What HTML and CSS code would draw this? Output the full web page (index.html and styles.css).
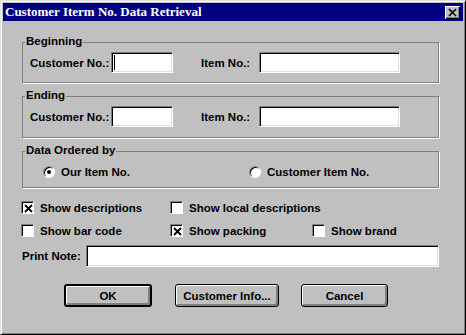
FILE: index.html
```html
<!DOCTYPE html>
<html lang="en">
<head>
  <meta charset="UTF-8" />
  <title>Customer Iterm No. Data Retrieval</title>
  <link rel="stylesheet" href="styles.css">
</head>
<body>

  <div class="window">
    <div class="titlebar">
      <span class="title">Customer Iterm No. Data Retrieval</span>
      <span class="close-btn">
        <svg width="15" height="13" viewBox="0 0 15 13"><path d="M4 3 L11 10 M11 3 L4 10" stroke="#000" stroke-width="1.7" fill="none"/></svg>
      </span>
    </div>

    <div class="content">
      <div class="group first">
        <div class="group-title">Beginning</div>
        <div class="field-row">
          <span class="lbl lbl-cust">Customer No.:</span>
          <span class="field field-cust"><span class="caret"></span></span>
          <span class="lbl lbl-item">Item No.:</span>
          <span class="field field-item"></span>
        </div>
      </div>

      <div class="group ending">
        <div class="group-title">Ending</div>
        <div class="field-row">
          <span class="lbl lbl-cust">Customer No.:</span>
          <span class="field field-cust"></span>
          <span class="lbl lbl-item">Item No.:</span>
          <span class="field field-item"></span>
        </div>
      </div>

      <div class="group">
        <div class="group-title">Data Ordered by</div>
        <div class="radio-row">
          <span class="option option-first"><span class="radio checked"><span class="dot"></span></span>Our Item No.</span>
          <span class="option"><span class="radio"></span>Customer Item No.</span>
        </div>
      </div>

      <div class="check-row">
        <span class="check col-1"><span class="box"><svg width="9" height="9" viewBox="0 0 9 9"><path d="M1 1 L8 8 M8 1 L1 8" stroke="#000" stroke-width="1.8"/></svg></span>Show descriptions</span>
        <span class="check col-2"><span class="box"></span>Show local descriptions</span>
      </div>
      <div class="check-row second">
        <span class="check col-1"><span class="box"></span>Show bar code</span>
        <span class="check col-2"><span class="box"><svg width="9" height="9" viewBox="0 0 9 9"><path d="M1 1 L8 8 M8 1 L1 8" stroke="#000" stroke-width="1.8"/></svg></span>Show packing</span>
        <span class="check"><span class="box"></span>Show brand</span>
      </div>

      <div class="note-row">
        <span class="lbl lbl-note">Print Note:</span>
        <span class="field field-note"></span>
      </div>

      <div class="buttons">
        <span class="btn btn-ok">OK</span>
        <span class="btn btn-info">Customer Info...</span>
        <span class="btn btn-cancel">Cancel</span>
      </div>
    </div>
  </div>

</body>
</html>
```

FILE: styles.css
```css
body {
  margin: 0;
  font-family: "Liberation Sans", Arial, sans-serif;
  font-size: 11.5px;
  font-weight: bold;
  color: #000;
  background: #c0c0c0;
  white-space: nowrap;
}

.window {
  width: 466px;
  height: 335px;
  box-sizing: border-box;
  border: 1px solid;
  border-color: #dfdfdf #000 #000 #dfdfdf;
  box-shadow: inset 1px 1px 0 #fff, inset -1px -1px 0 #808080;
  padding: 2px;
  background: #c0c0c0;
}

/* title bar */
.titlebar {
  height: 18px;
  background: #000080;
  display: flex;
  align-items: center;
  justify-content: space-between;
}

.title {
  font-family: "Liberation Serif", "Times New Roman", serif;
  font-size: 13px;
  color: #fff;
  padding-left: 2px;
}

.close-btn {
  width: 15px;
  height: 13px;
  margin-right: 3px;
  background: #c0c0c0;
  box-shadow: inset 1px 1px 0 #fff, inset -1px -1px 0 #000, inset -2px -2px 0 #808080;
  display: flex;
}

/* dialog content */
.content {
  padding-left: 19px;
}

.group {
  width: 417px;
  box-sizing: border-box;
  border: 1px solid #808080;
  box-shadow: 1px 1px 0 #fff;
  margin-top: 13px;
  padding: 0 0 9px 7px;
}

.group.first {
  margin-top: 21px;
}

.group.ending {
  padding-bottom: 10px;
}

.group-title {
  width: fit-content;
  margin: -8px 0 0 -5px;
  padding: 0 1px;
  line-height: 13px;
  background: #c0c0c0;
}

.field-row {
  display: flex;
  align-items: center;
  margin-top: 4px;
}

.lbl { flex-shrink: 0; }
.lbl-cust { width: 81px; }
.lbl-item { width: 58px; margin-left: 28px; }
.lbl-note { width: 64px; }

.field {
  flex-shrink: 0;
  height: 21px;
  box-sizing: border-box;
  background: #fff;
  border: 1px solid;
  border-color: #808080 #fff #fff #808080;
  box-shadow: inset 1px 1px 0 #000, inset -1px -1px 0 #dfdfdf;
  display: flex;
  align-items: center;
  padding-left: 2px;
}

.field-cust { width: 62px; }
.field-item { width: 141px; }
.field-note { width: 353px; height: 22px; }

.caret {
  width: 1px;
  height: 15px;
  background: #000;
}

/* radio buttons */
.radio-row {
  display: flex;
  align-items: center;
  height: 13px;
  margin-top: 8px;
  padding-left: 13px;
}

.option {
  display: flex;
  align-items: center;
}

.option-first { width: 206px; }

.radio {
  flex-shrink: 0;
  width: 12px;
  height: 12px;
  box-sizing: border-box;
  border-radius: 50%;
  background: #fff;
  border: 1px solid;
  border-color: #808080 #fff #fff #808080;
  box-shadow: inset 1px 1px 0 #000;
  margin-right: 6px;
  display: flex;
  align-items: center;
  justify-content: center;
}

.dot {
  width: 4px;
  height: 4px;
  border-radius: 50%;
  background: #000;
}

/* check boxes */
.check-row {
  display: flex;
  align-items: center;
  margin: 13px 0 0 -1px;
}

.check-row.second {
  margin-top: 10px;
}

.check {
  display: flex;
  align-items: center;
  flex-shrink: 0;
}

.col-1 { width: 149px; }
.col-2 { width: 142px; }

.box {
  flex-shrink: 0;
  width: 13px;
  height: 13px;
  box-sizing: border-box;
  background: #fff;
  border: 1px solid;
  border-color: #808080 #fff #fff #808080;
  box-shadow: inset 1px 1px 0 #000;
  margin-right: 6px;
  display: flex;
  align-items: center;
  justify-content: center;
  padding: 1px 0 0 1px;
}

.note-row {
  display: flex;
  align-items: center;
  margin-top: 8px;
}

/* push buttons */
.buttons {
  display: flex;
  margin: 17px 0 0 42px;
  gap: 23px;
}

.btn {
  height: 23px;
  box-sizing: border-box;
  border: 1px solid #000;
  border-radius: 3px;
  background: #c0c0c0;
  box-shadow: inset 1px 1px 0 #fff, inset -1px -1px 0 #808080, inset -2px -2px 0 #808080;
  display: flex;
  align-items: center;
  justify-content: center;
}

.btn-ok { width: 88px; border-width: 2px; }
.btn-info { width: 104px; margin-right: -1px; }
.btn-cancel { width: 87px; }
```
